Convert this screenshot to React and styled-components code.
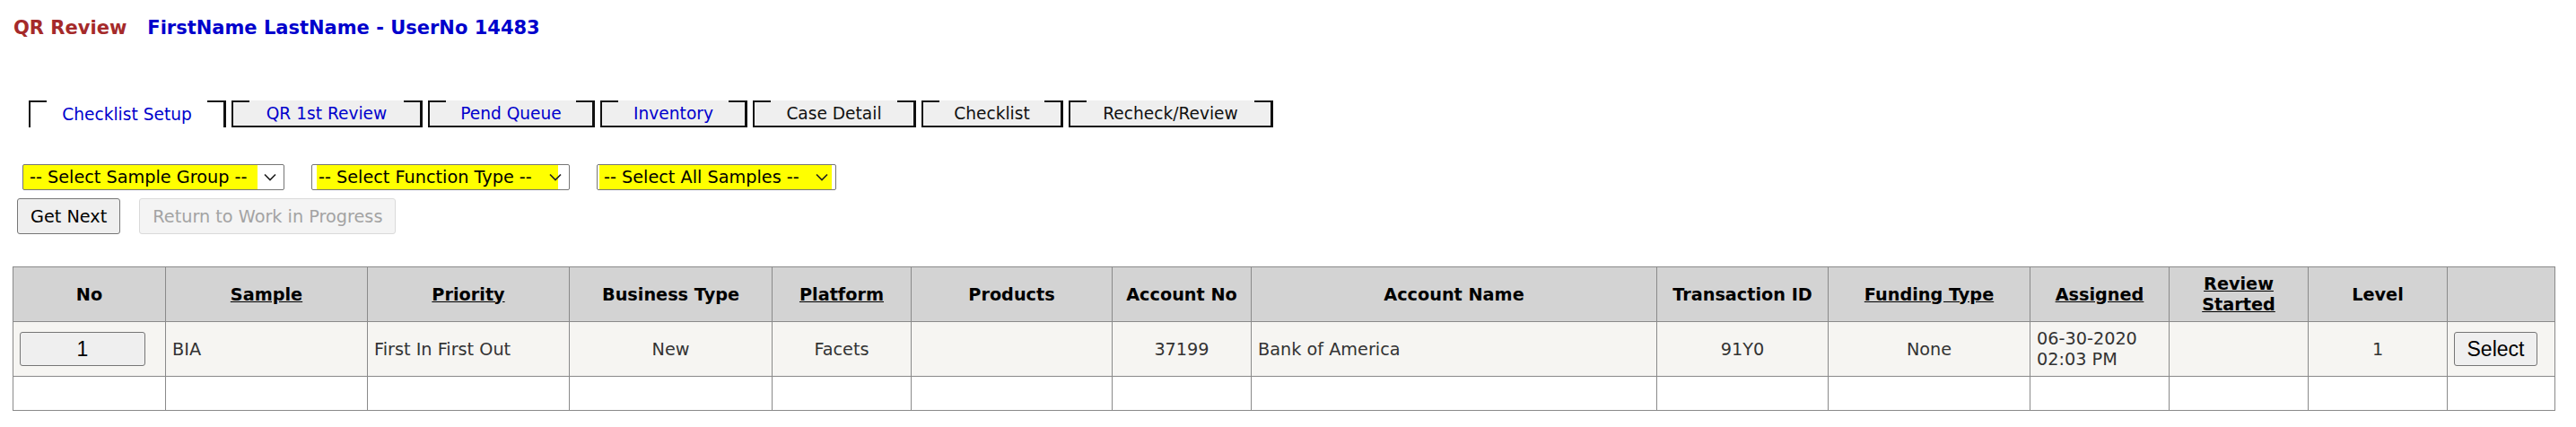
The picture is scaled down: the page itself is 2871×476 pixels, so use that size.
import styled, { createGlobalStyle } from "styled-components";

const GlobalStyle = createGlobalStyle`
  body {
    margin: 0;
    background: #fff;
    font-family: Verdana, "DejaVu Sans", sans-serif;
    font-size: 19.25px;
    color: #111;
  }
`;

const tabs = [
  { label: "Checklist Setup", w: 220, blue: true, active: true },
  { label: "QR 1st Review", w: 213, blue: true },
  { label: "Pend Queue", w: 186, blue: true },
  { label: "Inventory", w: 164, blue: true },
  { label: "Case Detail", w: 182 },
  { label: "Checklist", w: 158 },
  { label: "Recheck/Review", w: 228 },
];

const selects = [
  { label: "-- Select Sample Group --", w: 292, hl: 261, hlx: 0 },
  { label: "-- Select Function Type --", w: 288, hl: 269, hlx: 5 },
  { label: "-- Select All Samples --", w: 267, hl: 259, hlx: 2 },
];

const columns = [
  { title: "No", w: 170 },
  { title: "Sample", w: 225, sort: true },
  { title: "Priority", w: 225, sort: true },
  { title: "Business Type", w: 226 },
  { title: "Platform", w: 155, sort: true },
  { title: "Products", w: 224 },
  { title: "Account No", w: 155 },
  { title: "Account Name", w: 452 },
  { title: "Transaction ID", w: 191 },
  { title: "Funding Type", w: 225, sort: true },
  { title: "Assigned", w: 155, sort: true },
  { title: "Review Started", w: 155, sort: true },
  { title: "Level", w: 155 },
  { title: "", w: 120 },
];

function Chevron() {
  return (
    <svg width="14" height="9" viewBox="0 0 14 9">
      <polyline
        points="1,1.5 7,7.5 13,1.5"
        fill="none"
        stroke="#222"
        strokeWidth="1.7"
      />
    </svg>
  );
}

export default function App() {
  return (
    <Page>
      <GlobalStyle />
      <Header>
        <AppTitle>QR Review</AppTitle>
        <UserName>FirstName LastName - UserNo 14483</UserName>
      </Header>

      <TabBar>
        {tabs.map((t) => (
          <Tab key={t.label} $w={t.w} $active={t.active} $blue={t.blue}>
            {t.label}
          </Tab>
        ))}
      </TabBar>

      <SelectRow>
        {selects.map((s) => (
          <SelectBox key={s.label} $w={s.w} $hl={s.hl} $hlx={s.hlx}>
            <span>{s.label}</span>
            <Chevron />
          </SelectBox>
        ))}
      </SelectRow>

      <ButtonRow>
        <ActionButton>Get Next</ActionButton>
        <ActionButton disabled>Return to Work in Progress</ActionButton>
      </ButtonRow>

      <Grid>
        <colgroup>
          {columns.map((c, i) => (
            <col key={i} style={{ width: c.w }} />
          ))}
        </colgroup>
        <thead>
          <tr>
            {columns.map((c, i) => (
              <Th key={i}>{c.sort ? <SortLink>{c.title}</SortLink> : c.title}</Th>
            ))}
          </tr>
        </thead>
        <tbody>
          <DataRow>
            <Td>
              <RowButton $w={140}>1</RowButton>
            </Td>
            <Td>BIA</Td>
            <Td>First In First Out</Td>
            <Td $align="center">New</Td>
            <Td $align="center">Facets</Td>
            <Td></Td>
            <Td $align="center">37199</Td>
            <Td>Bank of America</Td>
            <Td $align="center">91Y0</Td>
            <Td $align="center">None</Td>
            <Td>
              06-30-2020
              <br />
              02:03 PM
            </Td>
            <Td></Td>
            <Td $align="center">1</Td>
            <Td>
              <RowButton $w={93}>Select</RowButton>
            </Td>
          </DataRow>
          <EmptyRow>
            {columns.map((c, i) => (
              <Td key={i}>&nbsp;</Td>
            ))}
          </EmptyRow>
        </tbody>
      </Grid>
    </Page>
  );
}

const Page = styled.div`
  padding: 0 0 20px 14px;
`;

const Header = styled.div`
  display: flex;
  gap: 23px;
  padding-top: 19px;
  margin-left: 1px;
  font-size: 21px;
  font-weight: bold;
  line-height: 24px;
`;

const AppTitle = styled.span`
  color: #a52a2a;
`;

const UserName = styled.span`
  color: #0000cc;
`;

const TabBar = styled.div`
  display: flex;
  gap: 6px;
  margin: 69px 0 0 18px;
`;

const Tab = styled.div`
  width: ${(p) => p.$w}px;
  height: 30px;
  box-sizing: border-box;
  display: flex;
  align-items: center;
  justify-content: center;
  white-space: nowrap;
  font-size: 18.6px;
  color: ${(p) => (p.$blue ? "#0000cc" : "#111")};
  border-left: 2px solid #111;
  border-right: 3px solid #111;
  border-bottom: ${(p) => (p.$active ? "none" : "2px solid #111")};
  background:
    linear-gradient(#111, #111) left top / 18px 2px no-repeat,
    linear-gradient(#111, #111) right top / 18px 2px no-repeat,
    ${(p) => (p.$active ? "#fff" : "#efefef")};
  cursor: pointer;
`;

const SelectRow = styled.div`
  display: flex;
  gap: 30px;
  margin: 41px 0 0 11px;
`;

const SelectBox = styled.div`
  width: ${(p) => p.$w}px;
  height: 29px;
  box-sizing: border-box;
  border: 1px solid #767676;
  border-radius: 2px;
  display: flex;
  align-items: center;
  justify-content: space-between;
  padding: 0 8px 0 7px;
  color: #000;
  white-space: nowrap;
  background:
    linear-gradient(#ffff00, #ffff00) ${(p) => p.$hlx}px 0 / ${(p) => p.$hl}px 100% no-repeat,
    #fff;
`;

const ButtonRow = styled.div`
  display: flex;
  gap: 21px;
  margin: 9px 0 0 5px;
`;

const ActionButton = styled.button`
  height: 40px;
  padding: 0 14px;
  font-family: Verdana, "DejaVu Sans", sans-serif;
  font-size: 19.25px;
  color: #000;
  background: #efefef;
  border: 1px solid #767676;
  border-radius: 3px;
  &:disabled {
    color: #a3a3a3;
    background: #f4f4f4;
    border-color: #dadada;
  }
`;

const Grid = styled.table`
  margin-top: 36px;
  width: 2833px;
  table-layout: fixed;
  border-collapse: collapse;
  line-height: 23px;
`;

const Th = styled.th`
  background: #d3d3d3;
  border: 1px solid #8a8a8a;
  padding: 7px;
  font-weight: bold;
  color: #000;
  text-align: center;
  vertical-align: middle;
`;

const SortLink = styled.span`
  text-decoration: underline;
  cursor: pointer;
`;

const DataRow = styled.tr`
  background: #f6f5f2;
`;

const EmptyRow = styled.tr`
  background: #fff;
`;

const Td = styled.td`
  border: 1px solid #8a8a8a;
  padding: 7px;
  color: #333;
  text-align: ${(p) => p.$align || "left"};
  vertical-align: middle;
`;

const RowButton = styled.button`
  display: block;
  width: ${(p) => p.$w}px;
  height: 38px;
  padding: 0;
  font-family: "Liberation Sans", Arial, sans-serif;
  font-size: 23px;
  color: #000;
  background: #efefef;
  border: 1px solid #767676;
  border-radius: 3px;
`;
